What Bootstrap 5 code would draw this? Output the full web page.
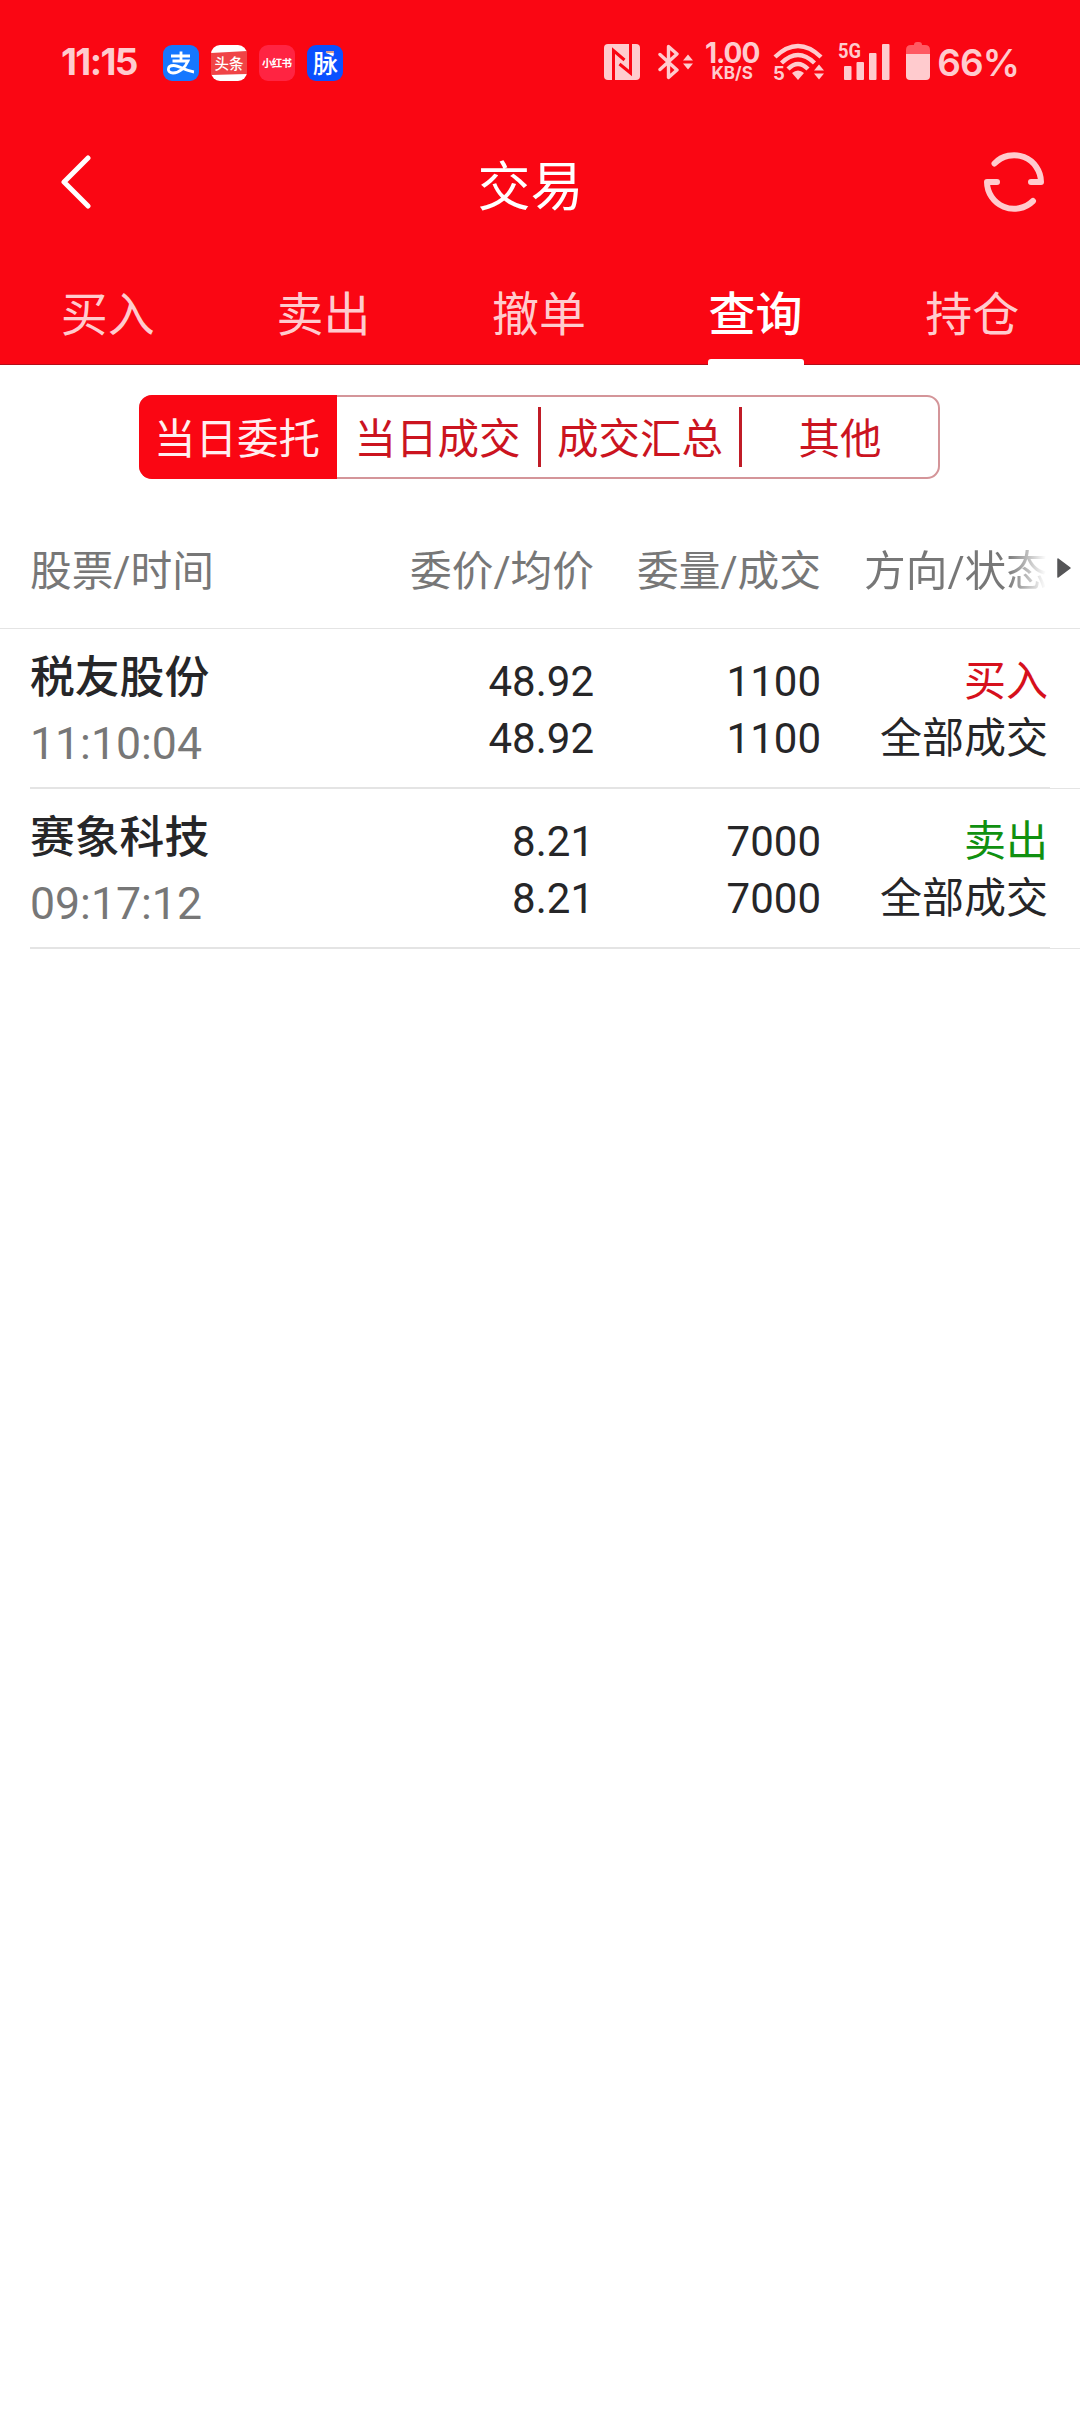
<!DOCTYPE html>
<html lang="zh-CN">
<head>
<meta charset="utf-8">
<meta name="viewport" content="width=device-width, initial-scale=1">
<title>交易</title>
<link href="https://cdn.jsdelivr.net/npm/bootstrap@5.3.0/dist/css/bootstrap.min.css" rel="stylesheet">
<style>
:root{--brand:#fa0613;--tint:#ffcbce;--deep:#cb141f}
body{font-family:Roboto,"Noto Sans CJK SC",sans-serif;color:#262628;background:#fff;min-height:2412px}
svg{display:block;flex:none}
.topbar{background:var(--brand);height:365px;border-bottom:1px solid #b50d18}
.statusbar{height:124px;padding:42px 61px 0 61px;color:var(--tint);font-family:Inter,sans-serif}
.clock{font-size:37px;font-weight:700;line-height:40px;width:102px;letter-spacing:-1.6px}
.app-icons{gap:12px;padding-top:3px}
.rate{width:56px;line-height:1;font-weight:700;margin-left:10px}
.rate-num{font-size:28px;line-height:23px;letter-spacing:-1px}
.rate-unit{font-size:17px;line-height:16px}
.level{font-size:37px;font-weight:600;line-height:42px;margin-left:7px;letter-spacing:-.9px}
.titlebar{height:116px;padding:0 36px 0 61px}
.titlebar h1{font-size:53px;line-height:60px;padding:12px 14px 0 0}
.tabs-main{height:124px}
.tabs-main .nav-link{color:var(--tint);font-size:47px;line-height:56px;padding:47px 0 0;border-radius:0}
.tabs-main .nav-link.active{color:#fff;font-weight:500}
.tabs-main .nav-link.active::after{content:"";display:block;width:96px;height:6px;margin:16px auto 0;border-radius:3px 3px 0 0;background:#fff}
.segment{width:801px;height:84px;margin:30px 0 0 139px;border:2px solid #d49599;border-radius:13px}
.segment .seg-btn{flex:1 1 0;border:0;border-radius:0;padding:6px 0 0;color:var(--deep);font-size:41.5px;line-height:54px;height:60px;white-space:nowrap}
.segment .seg-btn.active{background:var(--brand);color:#ffeef0;height:84px;flex:0 0 198px;margin-left:-2px;padding-right:2px;border-radius:13px 0 0 13px}
.segment .seg-line{border-right:3px solid #c01c27;flex:0 0 204px}
.segment .seg-mid{flex:0 0 201px}
.orders{padding-left:30px}
.orders-head{height:150px;color:#777;font-size:41.7px;line-height:60px;padding-top:63px;margin-left:-30px;padding-left:30px;border-bottom:1px solid #e4e4e4}
.c-name{width:337px}
.c-val{width:227px;text-align:right}
.fade-out{background:linear-gradient(90deg,#777 78%,#fff 99%);-webkit-background-clip:text;background-clip:text;color:transparent}
.order{height:160px;font-size:42px;line-height:57px;position:relative;border-bottom:1px solid #e4e4e4}
.order::after{content:"";position:absolute;left:0;bottom:0;width:1020px;height:1px;background:#e4e4e4}
.stock{font-size:44.8px;font-weight:500;line-height:62px;padding-top:18px}
.stamp{font-size:44.6px;line-height:62px;color:#777;margin-top:4px}
.vals{padding-top:24px}
.buy{color:#d6101c}.sell{color:#109010}
</style>
</head>
<body>
<header class="topbar">
  <div class="statusbar d-flex align-items-start">
    <span class="clock">11:15</span>
    <div class="app-icons d-flex">
      <svg width="36" height="36" viewBox="0 0 36 36"><rect width="36" height="36" rx="9" fill="#1677ff"/><path d="M8 11h19M18 6.500v9.500M9.500 16H25C22 23 16 28 10 28C3.500 28 4 20.500 10.500 20.500C17 20.500 22 26 31 27" fill="none" stroke="#fff" stroke-width="2.800"/></svg>
      <svg width="36" height="36" viewBox="0 0 36 36"><rect width="36" height="36" rx="9" fill="#fff"/><path d="M0 8L36 6V29L0 30Z" fill="#f04446"/><text x="18" y="24" text-anchor="middle" font-size="14.500" font-weight="500" fill="#fff" font-family="Noto Sans CJK SC">头条</text></svg>
      <svg width="36" height="36" viewBox="0 0 36 36"><rect width="36" height="36" rx="9" fill="#ff2442"/><text x="18" y="22" text-anchor="middle" font-size="10.500" font-weight="700" fill="#fff" font-family="Noto Sans CJK SC" textLength="30">小红书</text></svg>
      <svg width="36" height="36" viewBox="0 0 36 36"><rect width="36" height="36" rx="9" fill="#0b50ff"/><text x="18.500" y="27.500" text-anchor="middle" font-size="25" font-weight="500" fill="#fff" font-family="Noto Sans CJK SC">脉</text><path d="M19 7h8" stroke="#d99b91" stroke-width="2"/></svg>
    </div>
    <div class="d-flex align-items-start ms-auto">
      <svg width="36" height="38" viewBox="0 0 36 38"><rect y="2" width="36" height="36" rx="4" fill="#ffcbce"/><path d="M9.500 38V8.500L20.500 18M26.500 2V31L15.500 22" fill="none" stroke="#fa0613" stroke-width="3"/></svg>
      <svg width="36" height="38" viewBox="0 0 36 38" style="margin-left:18px"><path d="M2 12.500L19 28L10.500 35.500V4.500L19 12L2 27.500" fill="none" stroke="#ffcbce" stroke-width="3.400" stroke-linejoin="round" stroke-linecap="round"/><path d="M25 18.500l5-6 5 6zM25 21.500l5 6 5-6z" fill="#ffcbce"/></svg>
      <div class="rate text-center"><div class="rate-num">1.00</div><div class="rate-unit">KB/S</div></div>
      <svg width="52" height="46" viewBox="0 0 52 46" style="margin-left:13px"><g fill="none" stroke="#ffcbce" stroke-width="4.400"><path d="M2 15Q25-7 48 15"/><path d="M8.500 21Q25 5 41.500 21"/><path d="M15 27Q25 17 35 27"/></g><path d="M19 31Q25 26 31 31L25 38Z" fill="#ffcbce"/><path d="M41 28.500l5-6 5 6zM41 31.500l5 6 5-6z" fill="#ffcbce"/><text x="0" y="38" font-size="18.500" font-weight="700" fill="#ffcbce">5</text></svg>
      <svg width="52" height="46" viewBox="0 -5 52 46" style="margin:-5px 0 0 13px"><g fill="#ffcbce"><rect x="6" y="24" width="7.500" height="14" rx="1"/><rect x="18.500" y="20" width="7.500" height="18" rx="1"/><rect x="31" y="11" width="7.500" height="27" rx="1"/><rect x="44" y="2" width="7.500" height="36" rx="1"/><text x="0" y="16" font-size="20.500" font-weight="700" textLength="23" lengthAdjust="spacingAndGlyphs" font-family="Roboto">5G</text></g></svg>
      <svg width="24" height="38" viewBox="0 0 24 38" style="margin-left:16px"><path d="M0 12V8Q0 3 5 3H8Q8 0 11 0H13Q16 0 16 3H19Q24 3 24 8V12Z" fill="#ff5a63"/><path d="M0 12H24V34Q24 38 20 38H4Q0 38 0 34Z" fill="#ffcbce"/></svg>
      <span class="level">66%</span>
    </div>
  </div>
  <div class="titlebar d-flex align-items-center justify-content-between">
    <svg width="30" height="54" viewBox="0 0 30 54"><path d="M27 3L3 27L27 51" fill="none" stroke="#fff" stroke-width="5" stroke-linecap="round" stroke-linejoin="round"/></svg>
    <h1 class="m-0 fw-normal text-white">交易</h1>
    <svg width="60" height="60" viewBox="0 0 60 60"><path d="M10.500 11.500A27 27 0 0 1 57 30H47M49 49A27 27 0 0 1 3 30H13" fill="none" stroke="#ffcbce" stroke-width="6" stroke-linecap="round" stroke-linejoin="round"/></svg>
  </div>
  <nav class="nav nav-fill tabs-main">
    <a class="nav-link nav-item">买入</a><a class="nav-link nav-item">卖出</a><a class="nav-link nav-item">撤单</a><a class="nav-link nav-item active">查询</a><a class="nav-link nav-item">持仓</a>
  </nav>
</header>
<main>
  <div class="segment d-flex align-items-center">
    <button class="btn seg-btn active">当日委托</button>
    <button class="btn seg-btn seg-line">当日成交</button>
    <button class="btn seg-btn seg-line seg-mid">成交汇总</button>
    <button class="btn seg-btn">其他</button>
  </div>
  <section class="orders">
    <div class="orders-head d-flex">
      <div class="c-name">股票/时间</div><div class="c-val">委价/均价</div><div class="c-val">委量/成交</div><div class="c-val"><span class="fade-out">方向/状态</span></div>
      <svg width="14" height="20" viewBox="0 0 14 20" style="margin:16px 0 0 9px"><path d="M1 1L13 10L1 19Z" fill="#555557" stroke="#555557" stroke-width="1.500" stroke-linejoin="round"/></svg>
    </div>
    <div class="order d-flex">
      <div class="c-name"><div class="stock">税友股份</div><div class="stamp">11:10:04</div></div>
      <div class="c-val vals"><div>48.92</div><div>48.92</div></div>
      <div class="c-val vals"><div>1100</div><div>1100</div></div>
      <div class="c-val vals"><div class="buy">买入</div><div>全部成交</div></div>
    </div>
    <div class="order d-flex">
      <div class="c-name"><div class="stock">赛象科技</div><div class="stamp">09:17:12</div></div>
      <div class="c-val vals"><div>8.21</div><div>8.21</div></div>
      <div class="c-val vals"><div>7000</div><div>7000</div></div>
      <div class="c-val vals"><div class="sell">卖出</div><div>全部成交</div></div>
    </div>
  </section>
</main>
<script src="https://cdn.jsdelivr.net/npm/bootstrap@5.3.0/dist/js/bootstrap.bundle.min.js"></script>
</body>
</html>
